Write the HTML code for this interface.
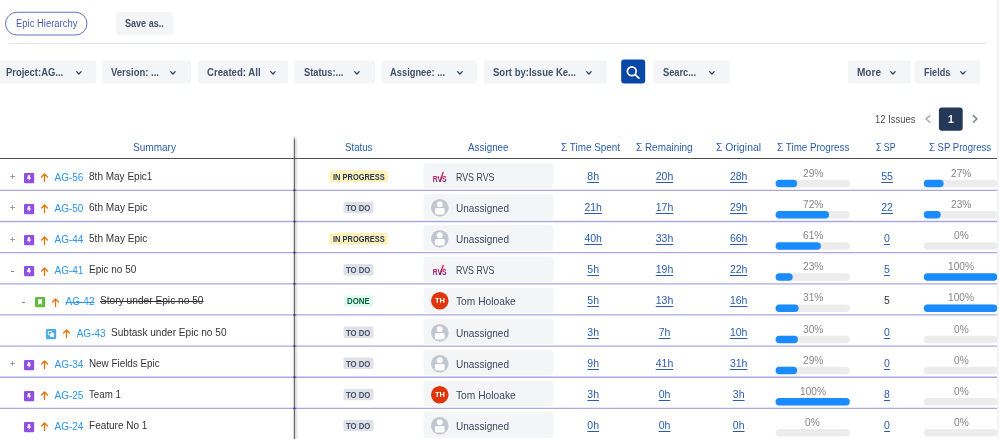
<!DOCTYPE html><html><head><meta charset="utf-8"><title>Epic Hierarchy</title><style>
*{box-sizing:border-box;margin:0;padding:0}
html,body{width:999px;height:439px;overflow:hidden;background:#fff}
body{font-family:"Liberation Sans",sans-serif;font-size:10px;color:#333;position:relative}
#app{position:absolute;left:0;top:0;width:999px;height:439px;will-change:transform}
.a,.t{position:absolute}
.t{white-space:pre}
svg{position:absolute;overflow:visible}
</style></head><body><div id="app">
<svg style="left:0;top:0" width="999" height="439" viewBox="0 0 999 439"><rect x="5.50" y="12.25" width="81.50" height="22.75" rx="11.40" fill="#fff" stroke="#6270c4" stroke-width="1"/><rect x="116.30" y="12.00" width="56.70" height="23.10" rx="3.00" fill="#f4f5f7"/><rect x="9.00" y="43.10" width="977.00" height="1.00" rx="0.00" fill="#e5e5e5"/><rect x="-3.00" y="60.40" width="99.20" height="23.00" rx="3.00" fill="#f4f5f7"/><rect x="102.40" y="60.40" width="88.60" height="23.00" rx="3.00" fill="#f4f5f7"/><rect x="198.00" y="60.40" width="90.20" height="23.00" rx="3.00" fill="#f4f5f7"/><rect x="294.60" y="60.40" width="80.40" height="23.00" rx="3.00" fill="#f4f5f7"/><rect x="381.40" y="60.40" width="95.80" height="23.00" rx="3.00" fill="#f4f5f7"/><rect x="483.60" y="60.40" width="123.00" height="23.00" rx="3.00" fill="#f4f5f7"/><rect x="653.60" y="60.40" width="76.00" height="23.00" rx="3.00" fill="#f4f5f7"/><rect x="847.90" y="60.40" width="62.70" height="23.00" rx="3.00" fill="#f4f5f7"/><rect x="914.30" y="60.40" width="66.00" height="23.00" rx="3.00" fill="#f4f5f7"/><rect x="621.20" y="59.60" width="24.00" height="24.00" rx="3.00" fill="#0747a6"/><rect x="938.90" y="107.60" width="23.80" height="23.20" rx="3.00" fill="#253858"/><rect x="329.25" y="170.60" width="58.50" height="11.50" rx="2.00" fill="#fff0b3"/><rect x="423.50" y="163.00" width="129.70" height="25.50" rx="3.00" fill="#f4f5f7"/><rect x="775.60" y="179.85" width="74.20" height="7.50" rx="3.75" fill="#ececec"/><rect x="775.60" y="179.85" width="21.52" height="7.50" rx="3.75" fill="#1a8cff"/><rect x="923.80" y="179.85" width="73.50" height="7.50" rx="3.75" fill="#ececec"/><rect x="923.80" y="179.85" width="19.84" height="7.50" rx="3.75" fill="#1a8cff"/><rect x="343.50" y="201.76" width="30.00" height="11.50" rx="2.00" fill="#dfe1e6"/><rect x="423.50" y="194.20" width="129.70" height="25.46" rx="3.00" fill="#f4f5f7"/><rect x="775.60" y="211.01" width="74.20" height="7.50" rx="3.75" fill="#ececec"/><rect x="775.60" y="211.01" width="53.42" height="7.50" rx="3.75" fill="#1a8cff"/><rect x="923.80" y="211.01" width="73.50" height="7.50" rx="3.75" fill="#ececec"/><rect x="923.80" y="211.01" width="16.91" height="7.50" rx="3.75" fill="#1a8cff"/><rect x="329.25" y="232.90" width="58.50" height="11.50" rx="2.00" fill="#fff0b3"/><rect x="423.50" y="225.36" width="129.70" height="25.44" rx="3.00" fill="#f4f5f7"/><rect x="775.60" y="242.15" width="74.20" height="7.50" rx="3.75" fill="#ececec"/><rect x="775.60" y="242.15" width="45.26" height="7.50" rx="3.75" fill="#1a8cff"/><rect x="923.80" y="242.15" width="73.50" height="7.50" rx="3.75" fill="#ececec"/><rect x="343.50" y="264.10" width="30.00" height="11.50" rx="2.00" fill="#dfe1e6"/><rect x="423.50" y="256.50" width="129.70" height="25.50" rx="3.00" fill="#f4f5f7"/><rect x="775.60" y="273.35" width="74.20" height="7.50" rx="3.75" fill="#ececec"/><rect x="775.60" y="273.35" width="17.07" height="7.50" rx="3.75" fill="#1a8cff"/><rect x="923.80" y="273.35" width="73.50" height="7.50" rx="3.75" fill="#ececec"/><rect x="923.80" y="273.35" width="73.50" height="7.50" rx="3.75" fill="#1a8cff"/><rect x="344.00" y="295.20" width="29.00" height="11.50" rx="2.00" fill="#e0fbec"/><rect x="423.50" y="287.70" width="129.70" height="25.40" rx="3.00" fill="#f4f5f7"/><rect x="775.60" y="304.45" width="74.20" height="7.50" rx="3.75" fill="#ececec"/><rect x="775.60" y="304.45" width="23.00" height="7.50" rx="3.75" fill="#1a8cff"/><rect x="923.80" y="304.45" width="73.50" height="7.50" rx="3.75" fill="#ececec"/><rect x="923.80" y="304.45" width="73.50" height="7.50" rx="3.75" fill="#1a8cff"/><rect x="343.50" y="326.40" width="30.00" height="11.50" rx="2.00" fill="#dfe1e6"/><rect x="423.50" y="318.80" width="129.70" height="25.50" rx="3.00" fill="#f4f5f7"/><rect x="775.60" y="335.65" width="74.20" height="7.50" rx="3.75" fill="#ececec"/><rect x="775.60" y="335.65" width="22.26" height="7.50" rx="3.75" fill="#1a8cff"/><rect x="923.80" y="335.65" width="73.50" height="7.50" rx="3.75" fill="#ececec"/><rect x="343.50" y="357.50" width="30.00" height="11.50" rx="2.00" fill="#dfe1e6"/><rect x="423.50" y="350.00" width="129.70" height="25.40" rx="3.00" fill="#f4f5f7"/><rect x="775.60" y="366.75" width="74.20" height="7.50" rx="3.75" fill="#ececec"/><rect x="775.60" y="366.75" width="21.52" height="7.50" rx="3.75" fill="#1a8cff"/><rect x="923.80" y="366.75" width="73.50" height="7.50" rx="3.75" fill="#ececec"/><rect x="343.50" y="388.70" width="30.00" height="11.50" rx="2.00" fill="#dfe1e6"/><rect x="423.50" y="381.10" width="129.70" height="25.50" rx="3.00" fill="#f4f5f7"/><rect x="775.60" y="397.95" width="74.20" height="7.50" rx="3.75" fill="#ececec"/><rect x="775.60" y="397.95" width="74.20" height="7.50" rx="3.75" fill="#1a8cff"/><rect x="923.80" y="397.95" width="73.50" height="7.50" rx="3.75" fill="#ececec"/><rect x="343.50" y="419.80" width="30.00" height="11.50" rx="2.00" fill="#dfe1e6"/><rect x="423.50" y="412.30" width="129.70" height="25.40" rx="3.00" fill="#f4f5f7"/><rect x="775.60" y="429.05" width="74.20" height="7.50" rx="3.75" fill="#ececec"/><rect x="923.80" y="429.05" width="73.50" height="7.50" rx="3.75" fill="#ececec"/></svg>
<div class="t" style="left:15.50px;top:16.00px;font-size:10px;line-height:15px;color:#4a5ab8;transform:scaleX(0.9457);transform-origin:0 0;">Epic Hierarchy</div>
<div class="t" style="left:125.00px;top:16.00px;font-size:10.5px;line-height:14px;color:#42526e;font-weight:bold;transform:scaleX(0.8620);transform-origin:0 0;">Save as..</div>
<div class="t" style="left:6.40px;top:65.00px;font-size:10.5px;line-height:14px;color:#42526e;font-weight:bold;transform:scaleX(0.8992);transform-origin:0 0;">Project:AG...</div>
<svg style="left:76.0px;top:70.6px" width="6" height="4" viewBox="0 0 6 4"><path d="M0.6 0.6 L2.9 3 L5.2 0.6" fill="none" stroke="#344563" stroke-width="1.3" stroke-linecap="round" stroke-linejoin="round"/></svg>
<div class="t" style="left:111.40px;top:65.00px;font-size:10.5px;line-height:14px;color:#42526e;font-weight:bold;transform:scaleX(0.9038);transform-origin:0 0;">Version: ...</div>
<svg style="left:170.4px;top:70.6px" width="6" height="4" viewBox="0 0 6 4"><path d="M0.6 0.6 L2.9 3 L5.2 0.6" fill="none" stroke="#344563" stroke-width="1.3" stroke-linecap="round" stroke-linejoin="round"/></svg>
<div class="t" style="left:206.80px;top:65.00px;font-size:10.5px;line-height:14px;color:#42526e;font-weight:bold;transform:scaleX(0.9155);transform-origin:0 0;">Created: All</div>
<svg style="left:270.0px;top:70.6px" width="6" height="4" viewBox="0 0 6 4"><path d="M0.6 0.6 L2.9 3 L5.2 0.6" fill="none" stroke="#344563" stroke-width="1.3" stroke-linecap="round" stroke-linejoin="round"/></svg>
<div class="t" style="left:303.60px;top:65.00px;font-size:10.5px;line-height:14px;color:#42526e;font-weight:bold;transform:scaleX(0.8885);transform-origin:0 0;">Status:...</div>
<svg style="left:354.4px;top:70.6px" width="6" height="4" viewBox="0 0 6 4"><path d="M0.6 0.6 L2.9 3 L5.2 0.6" fill="none" stroke="#344563" stroke-width="1.3" stroke-linecap="round" stroke-linejoin="round"/></svg>
<div class="t" style="left:390.40px;top:65.00px;font-size:10.5px;line-height:14px;color:#42526e;font-weight:bold;transform:scaleX(0.8891);transform-origin:0 0;">Assignee: ...</div>
<svg style="left:457.0px;top:70.6px" width="6" height="4" viewBox="0 0 6 4"><path d="M0.6 0.6 L2.9 3 L5.2 0.6" fill="none" stroke="#344563" stroke-width="1.3" stroke-linecap="round" stroke-linejoin="round"/></svg>
<div class="t" style="left:492.60px;top:65.00px;font-size:10.5px;line-height:14px;color:#42526e;font-weight:bold;transform:scaleX(0.9060);transform-origin:0 0;">Sort by:Issue Ke...</div>
<svg style="left:586.0px;top:70.6px" width="6" height="4" viewBox="0 0 6 4"><path d="M0.6 0.6 L2.9 3 L5.2 0.6" fill="none" stroke="#344563" stroke-width="1.3" stroke-linecap="round" stroke-linejoin="round"/></svg>
<div class="t" style="left:662.60px;top:65.00px;font-size:10.5px;line-height:14px;color:#42526e;font-weight:bold;transform:scaleX(0.8829);transform-origin:0 0;">Searc...</div>
<svg style="left:708.8px;top:70.6px" width="6" height="4" viewBox="0 0 6 4"><path d="M0.6 0.6 L2.9 3 L5.2 0.6" fill="none" stroke="#344563" stroke-width="1.3" stroke-linecap="round" stroke-linejoin="round"/></svg>
<div class="t" style="left:856.90px;top:65.00px;font-size:10.5px;line-height:14px;color:#42526e;font-weight:bold;transform:scaleX(0.9564);transform-origin:0 0;">More</div>
<svg style="left:890.2px;top:70.6px" width="6" height="4" viewBox="0 0 6 4"><path d="M0.6 0.6 L2.9 3 L5.2 0.6" fill="none" stroke="#344563" stroke-width="1.3" stroke-linecap="round" stroke-linejoin="round"/></svg>
<div class="t" style="left:924.20px;top:65.00px;font-size:10.5px;line-height:14px;color:#42526e;font-weight:bold;transform:scaleX(0.8700);transform-origin:0 0;">Fields</div>
<svg style="left:959.9px;top:70.6px" width="6" height="4" viewBox="0 0 6 4"><path d="M0.6 0.6 L2.9 3 L5.2 0.6" fill="none" stroke="#344563" stroke-width="1.3" stroke-linecap="round" stroke-linejoin="round"/></svg>
<svg style="left:621.2px;top:59.6px" width="24" height="24" viewBox="0 0 24 24"><circle cx="10.8" cy="11.3" r="4.4" fill="none" stroke="#fff" stroke-width="1.7"/><path d="M14.2 14.7 L17.9 18.1" stroke="#fff" stroke-width="1.8" stroke-linecap="round"/></svg>
<div class="t" style="left:874.50px;top:112.00px;font-size:10px;line-height:15px;color:#505050;transform:scaleX(0.9483);transform-origin:0 0;">12 Issues</div>
<svg style="left:924.6px;top:114.9px" width="6" height="8" viewBox="0 0 6 8"><path d="M4.8 0.6 L1 3.9 L4.8 7.2" fill="none" stroke="#a0aabb" stroke-width="1.4" stroke-linecap="round" stroke-linejoin="round"/></svg>
<div class="t" style="left:948.08px;top:112.00px;font-size:10.5px;line-height:14px;color:#fff;font-weight:bold;">1</div>
<svg style="left:971.7px;top:114.9px" width="6" height="8" viewBox="0 0 6 8"><path d="M1.2 0.6 L5 3.9 L1.2 7.2" fill="none" stroke="#7a869a" stroke-width="1.4" stroke-linecap="round" stroke-linejoin="round"/></svg>
<div class="t" style="left:133.00px;top:140.00px;font-size:10.5px;line-height:14px;color:#2a5cad;transform:scaleX(0.9569);transform-origin:0 0;">Summary</div>
<div class="t" style="left:344.80px;top:140.00px;font-size:10.5px;line-height:14px;color:#2a5cad;transform:scaleX(0.9200);transform-origin:0 0;">Status</div>
<div class="t" style="left:468.20px;top:140.00px;font-size:10.5px;line-height:14px;color:#2a5cad;transform:scaleX(0.9397);transform-origin:0 0;">Assignee</div>
<div class="t" style="left:560.80px;top:140.00px;font-size:10.5px;line-height:14px;color:#2a5cad;transform:scaleX(0.9407);transform-origin:0 0;">Σ Time Spent</div>
<div class="t" style="left:635.55px;top:140.00px;font-size:10.5px;line-height:14px;color:#2a5cad;transform:scaleX(0.9478);transform-origin:0 0;">Σ Remaining</div>
<div class="t" style="left:716.10px;top:140.00px;font-size:10.5px;line-height:14px;color:#2a5cad;transform:scaleX(0.9870);transform-origin:0 0;">Σ Original</div>
<div class="t" style="left:776.70px;top:140.00px;font-size:10.5px;line-height:14px;color:#2a5cad;transform:scaleX(0.9366);transform-origin:0 0;">Σ Time Progress</div>
<div class="t" style="left:876.40px;top:140.00px;font-size:10.5px;line-height:14px;color:#2a5cad;transform:scaleX(0.8368);transform-origin:0 0;">Σ SP</div>
<div class="t" style="left:929.30px;top:140.00px;font-size:10.5px;line-height:14px;color:#2a5cad;transform:scaleX(0.9095);transform-origin:0 0;">Σ SP Progress</div>
<svg style="left:9.55px;top:174.30px" width="5" height="5" viewBox="0 0 5 5"><path d="M2.5 0.2 V4.8 M0.2 2.5 H4.8" stroke="#8993a4" stroke-width="0.9"/></svg>
<svg style="left:23.75px;top:172.70px" width="10.2" height="10.2" viewBox="0 0 10 10"><rect width="10" height="10" rx="1.2" fill="#904ee2"/><path d="M4.2 1.9 H6.2 L5.5 4.3 H7.1 L4.5 8.2 L4.9 5.8 H2.9 Z" fill="#fff"/></svg>
<svg style="left:40.95px;top:173.20px" width="7" height="9" viewBox="0 0 7 9"><path d="M3.5 8.6 V1 M0.55 4 L3.5 0.85 L6.45 4" fill="none" stroke="#e8740f" stroke-width="1.35" stroke-linecap="round" stroke-linejoin="round"/></svg>
<div class="t" style="left:54.50px;top:170.00px;font-size:10px;line-height:15px;color:#2b95f0;">AG-56</div>
<div class="t" style="left:89.05px;top:169.00px;font-size:10px;line-height:15px;color:#333;">8th May Epic1</div>
<div class="t" style="left:332.60px;top:172.00px;font-size:8.3px;line-height:10px;color:#253858;font-weight:bold;transform:scaleX(0.8987);transform-origin:0 0;">IN PROGRESS</div>
<svg style="left:431.00px;top:167.70px" width="17.6" height="17.6" viewBox="0 0 17.6 17.6"><text x="1.7" y="14.0" font-family="Liberation Sans, sans-serif" font-size="9" font-weight="bold" fill="url(#rg)" textLength="14" lengthAdjust="spacingAndGlyphs">RVS</text><path d="M9.3 13.2 L12.1 4.5" stroke="url(#rg2)" stroke-width="1.4" stroke-linecap="round"/></svg>
<div class="t" style="left:455.90px;top:170.00px;font-size:10.5px;line-height:14px;color:#3b4860;transform:scaleX(0.8399);transform-origin:0 0;">RVS RVS</div>
<div class="t" style="left:587.36px;top:169.00px;font-size:10.5px;line-height:14px;color:#2a5cad;text-decoration:underline;text-underline-offset:2px;">8h</div>
<div class="t" style="left:655.73px;top:169.00px;font-size:10.5px;line-height:14px;color:#2a5cad;text-decoration:underline;text-underline-offset:2px;">20h</div>
<div class="t" style="left:729.93px;top:169.00px;font-size:10.5px;line-height:14px;color:#2a5cad;text-decoration:underline;text-underline-offset:2px;">28h</div>
<div class="t" style="left:802.64px;top:166.00px;font-size:10.5px;line-height:14px;color:#868686;transform:scaleX(0.9664);transform-origin:0 0;">29%</div>
<div class="t" style="left:881.16px;top:169.00px;font-size:10.5px;line-height:14px;color:#2a5cad;text-decoration:underline;text-underline-offset:2px;">55</div>
<div class="t" style="left:951.04px;top:166.00px;font-size:10.5px;line-height:14px;color:#868686;transform:scaleX(0.9664);transform-origin:0 0;">27%</div>
<svg style="left:9.55px;top:205.46px" width="5" height="5" viewBox="0 0 5 5"><path d="M2.5 0.2 V4.8 M0.2 2.5 H4.8" stroke="#8993a4" stroke-width="0.9"/></svg>
<svg style="left:23.75px;top:203.86px" width="10.2" height="10.2" viewBox="0 0 10 10"><rect width="10" height="10" rx="1.2" fill="#904ee2"/><path d="M4.2 1.9 H6.2 L5.5 4.3 H7.1 L4.5 8.2 L4.9 5.8 H2.9 Z" fill="#fff"/></svg>
<svg style="left:40.95px;top:204.36px" width="7" height="9" viewBox="0 0 7 9"><path d="M3.5 8.6 V1 M0.55 4 L3.5 0.85 L6.45 4" fill="none" stroke="#e8740f" stroke-width="1.35" stroke-linecap="round" stroke-linejoin="round"/></svg>
<div class="t" style="left:54.50px;top:201.00px;font-size:10px;line-height:15px;color:#2b95f0;">AG-50</div>
<div class="t" style="left:89.05px;top:200.00px;font-size:10px;line-height:15px;color:#333;transform:scaleX(1.0102);transform-origin:0 0;">6th May Epic</div>
<div class="t" style="left:346.30px;top:203.00px;font-size:8.3px;line-height:10px;color:#42526e;font-weight:bold;transform:scaleX(0.9340);transform-origin:0 0;">TO DO</div>
<svg style="left:431.00px;top:198.86px" width="17.6" height="17.6" viewBox="0 0 17.6 17.6"><circle cx="8.8" cy="8.8" r="8.8" fill="#c1c7d0"/><circle cx="8.8" cy="5.2" r="2.9" fill="#fff"/><rect x="3.9" y="9.1" width="9.8" height="6.3" rx="1.6" fill="#fff"/></svg>
<div class="t" style="left:455.90px;top:201.00px;font-size:10.5px;line-height:14px;color:#3b4860;transform:scaleX(0.9558);transform-origin:0 0;">Unassigned</div>
<div class="t" style="left:584.43px;top:200.00px;font-size:10.5px;line-height:14px;color:#2a5cad;text-decoration:underline;text-underline-offset:2px;">21h</div>
<div class="t" style="left:655.73px;top:200.00px;font-size:10.5px;line-height:14px;color:#2a5cad;text-decoration:underline;text-underline-offset:2px;">17h</div>
<div class="t" style="left:729.93px;top:200.00px;font-size:10.5px;line-height:14px;color:#2a5cad;text-decoration:underline;text-underline-offset:2px;">29h</div>
<div class="t" style="left:802.64px;top:197.00px;font-size:10.5px;line-height:14px;color:#868686;transform:scaleX(0.9664);transform-origin:0 0;">72%</div>
<div class="t" style="left:881.16px;top:200.00px;font-size:10.5px;line-height:14px;color:#2a5cad;text-decoration:underline;text-underline-offset:2px;">22</div>
<div class="t" style="left:951.04px;top:197.00px;font-size:10.5px;line-height:14px;color:#868686;transform:scaleX(0.9664);transform-origin:0 0;">23%</div>
<svg style="left:9.55px;top:236.60px" width="5" height="5" viewBox="0 0 5 5"><path d="M2.5 0.2 V4.8 M0.2 2.5 H4.8" stroke="#8993a4" stroke-width="0.9"/></svg>
<svg style="left:23.75px;top:235.00px" width="10.2" height="10.2" viewBox="0 0 10 10"><rect width="10" height="10" rx="1.2" fill="#904ee2"/><path d="M4.2 1.9 H6.2 L5.5 4.3 H7.1 L4.5 8.2 L4.9 5.8 H2.9 Z" fill="#fff"/></svg>
<svg style="left:40.95px;top:235.50px" width="7" height="9" viewBox="0 0 7 9"><path d="M3.5 8.6 V1 M0.55 4 L3.5 0.85 L6.45 4" fill="none" stroke="#e8740f" stroke-width="1.35" stroke-linecap="round" stroke-linejoin="round"/></svg>
<div class="t" style="left:54.50px;top:232.00px;font-size:10px;line-height:15px;color:#2b95f0;">AG-44</div>
<div class="t" style="left:89.05px;top:231.00px;font-size:10px;line-height:15px;color:#333;transform:scaleX(1.0102);transform-origin:0 0;">5th May Epic</div>
<div class="t" style="left:332.60px;top:234.00px;font-size:8.3px;line-height:10px;color:#253858;font-weight:bold;transform:scaleX(0.8987);transform-origin:0 0;">IN PROGRESS</div>
<svg style="left:431.00px;top:230.00px" width="17.6" height="17.6" viewBox="0 0 17.6 17.6"><circle cx="8.8" cy="8.8" r="8.8" fill="#c1c7d0"/><circle cx="8.8" cy="5.2" r="2.9" fill="#fff"/><rect x="3.9" y="9.1" width="9.8" height="6.3" rx="1.6" fill="#fff"/></svg>
<div class="t" style="left:455.90px;top:232.00px;font-size:10.5px;line-height:14px;color:#3b4860;transform:scaleX(0.9558);transform-origin:0 0;">Unassigned</div>
<div class="t" style="left:584.43px;top:231.00px;font-size:10.5px;line-height:14px;color:#2a5cad;text-decoration:underline;text-underline-offset:2px;">40h</div>
<div class="t" style="left:655.73px;top:231.00px;font-size:10.5px;line-height:14px;color:#2a5cad;text-decoration:underline;text-underline-offset:2px;">33h</div>
<div class="t" style="left:729.93px;top:231.00px;font-size:10.5px;line-height:14px;color:#2a5cad;text-decoration:underline;text-underline-offset:2px;">66h</div>
<div class="t" style="left:802.64px;top:228.00px;font-size:10.5px;line-height:14px;color:#868686;transform:scaleX(0.9664);transform-origin:0 0;">61%</div>
<div class="t" style="left:884.08px;top:231.00px;font-size:10.5px;line-height:14px;color:#2a5cad;text-decoration:underline;text-underline-offset:2px;">0</div>
<div class="t" style="left:953.87px;top:228.00px;font-size:10.5px;line-height:14px;color:#868686;transform:scaleX(0.9657);transform-origin:0 0;">0%</div>
<svg style="left:10.55px;top:270.50px" width="3" height="1" viewBox="0 0 3 1"><path d="M0 .5 H3" stroke="#7a8699" stroke-width="1"/></svg>
<svg style="left:23.75px;top:266.20px" width="10.2" height="10.2" viewBox="0 0 10 10"><rect width="10" height="10" rx="1.2" fill="#904ee2"/><path d="M4.2 1.9 H6.2 L5.5 4.3 H7.1 L4.5 8.2 L4.9 5.8 H2.9 Z" fill="#fff"/></svg>
<svg style="left:40.95px;top:266.70px" width="7" height="9" viewBox="0 0 7 9"><path d="M3.5 8.6 V1 M0.55 4 L3.5 0.85 L6.45 4" fill="none" stroke="#e8740f" stroke-width="1.35" stroke-linecap="round" stroke-linejoin="round"/></svg>
<div class="t" style="left:54.50px;top:263.00px;font-size:10px;line-height:15px;color:#2b95f0;">AG-41</div>
<div class="t" style="left:89.05px;top:262.00px;font-size:10px;line-height:15px;color:#333;">Epic no 50</div>
<div class="t" style="left:346.30px;top:265.00px;font-size:8.3px;line-height:10px;color:#42526e;font-weight:bold;transform:scaleX(0.9340);transform-origin:0 0;">TO DO</div>
<svg style="left:431.00px;top:261.20px" width="17.6" height="17.6" viewBox="0 0 17.6 17.6"><text x="1.7" y="14.0" font-family="Liberation Sans, sans-serif" font-size="9" font-weight="bold" fill="url(#rg)" textLength="14" lengthAdjust="spacingAndGlyphs">RVS</text><path d="M9.3 13.2 L12.1 4.5" stroke="url(#rg2)" stroke-width="1.4" stroke-linecap="round"/></svg>
<div class="t" style="left:455.90px;top:263.00px;font-size:10.5px;line-height:14px;color:#3b4860;transform:scaleX(0.8399);transform-origin:0 0;">RVS RVS</div>
<div class="t" style="left:587.36px;top:262.00px;font-size:10.5px;line-height:14px;color:#2a5cad;text-decoration:underline;text-underline-offset:2px;">5h</div>
<div class="t" style="left:655.73px;top:262.00px;font-size:10.5px;line-height:14px;color:#2a5cad;text-decoration:underline;text-underline-offset:2px;">19h</div>
<div class="t" style="left:729.93px;top:262.00px;font-size:10.5px;line-height:14px;color:#2a5cad;text-decoration:underline;text-underline-offset:2px;">22h</div>
<div class="t" style="left:802.64px;top:259.00px;font-size:10.5px;line-height:14px;color:#868686;transform:scaleX(0.9664);transform-origin:0 0;">23%</div>
<div class="t" style="left:884.08px;top:262.00px;font-size:10.5px;line-height:14px;color:#2a5cad;text-decoration:underline;text-underline-offset:2px;">5</div>
<div class="t" style="left:948.22px;top:259.00px;font-size:10.5px;line-height:14px;color:#868686;transform:scaleX(0.9663);transform-origin:0 0;">100%</div>
<svg style="left:21.65px;top:301.60px" width="3" height="1" viewBox="0 0 3 1"><path d="M0 .5 H3" stroke="#7a8699" stroke-width="1"/></svg>
<svg style="left:34.85px;top:297.30px" width="10.2" height="10.2" viewBox="0 0 10 10"><rect width="10" height="10" rx="1.2" fill="#63ba3c"/><path d="M3.1 2.3 H6.9 V7.8 L5 6.1 L3.1 7.8 Z" fill="#fff"/></svg>
<svg style="left:52.05px;top:297.80px" width="7" height="9" viewBox="0 0 7 9"><path d="M3.5 8.6 V1 M0.55 4 L3.5 0.85 L6.45 4" fill="none" stroke="#e8740f" stroke-width="1.35" stroke-linecap="round" stroke-linejoin="round"/></svg>
<div class="t" style="left:65.60px;top:294.00px;font-size:10px;line-height:15px;color:#2b95f0;text-decoration:line-through;">AG-42</div>
<div class="t" style="left:100.15px;top:293.00px;font-size:10px;line-height:15px;color:#333;transform:scaleX(1.0174);transform-origin:0 0;text-decoration:line-through;">Story under Epic no 50</div>
<div class="t" style="left:347.10px;top:296.00px;font-size:8.3px;line-height:10px;color:#006644;font-weight:bold;transform:scaleX(0.9506);transform-origin:0 0;">DONE</div>
<svg style="left:431.00px;top:292.30px" width="17.6" height="17.6" viewBox="0 0 17.6 17.6"><circle cx="8.8" cy="8.8" r="8.8" fill="#de350b"/><text x="8.8" y="11.5" font-family="Liberation Sans, sans-serif" font-size="7.4" font-weight="bold" fill="#fff" text-anchor="middle">TH</text></svg>
<div class="t" style="left:455.90px;top:294.00px;font-size:10.5px;line-height:14px;color:#3b4860;transform:scaleX(0.9742);transform-origin:0 0;">Tom Holoake</div>
<div class="t" style="left:587.36px;top:293.00px;font-size:10.5px;line-height:14px;color:#2a5cad;text-decoration:underline;text-underline-offset:2px;">5h</div>
<div class="t" style="left:655.73px;top:293.00px;font-size:10.5px;line-height:14px;color:#2a5cad;text-decoration:underline;text-underline-offset:2px;">13h</div>
<div class="t" style="left:729.93px;top:293.00px;font-size:10.5px;line-height:14px;color:#2a5cad;text-decoration:underline;text-underline-offset:2px;">16h</div>
<div class="t" style="left:802.64px;top:290.00px;font-size:10.5px;line-height:14px;color:#868686;transform:scaleX(0.9664);transform-origin:0 0;">31%</div>
<div class="t" style="left:884.08px;top:293.00px;font-size:10.5px;line-height:14px;color:#333;">5</div>
<div class="t" style="left:948.22px;top:290.00px;font-size:10.5px;line-height:14px;color:#868686;transform:scaleX(0.9663);transform-origin:0 0;">100%</div>
<svg style="left:45.95px;top:328.50px" width="10.2" height="10.2" viewBox="0 0 10 10"><rect width="10" height="10" rx="1.2" fill="#4bade8"/><rect x="2.3" y="2.3" width="3.6" height="3.6" rx=".7" fill="none" stroke="#fff" stroke-width=".9"/><rect x="4.1" y="4.1" width="3.8" height="3.8" rx=".7" fill="#fff"/></svg>
<svg style="left:63.15px;top:329.00px" width="7" height="9" viewBox="0 0 7 9"><path d="M3.5 8.6 V1 M0.55 4 L3.5 0.85 L6.45 4" fill="none" stroke="#e8740f" stroke-width="1.35" stroke-linecap="round" stroke-linejoin="round"/></svg>
<div class="t" style="left:76.70px;top:326.00px;font-size:10px;line-height:15px;color:#2b95f0;">AG-43</div>
<div class="t" style="left:111.25px;top:325.00px;font-size:10px;line-height:15px;color:#333;transform:scaleX(1.0085);transform-origin:0 0;">Subtask under Epic no 50</div>
<div class="t" style="left:346.30px;top:328.00px;font-size:8.3px;line-height:10px;color:#42526e;font-weight:bold;transform:scaleX(0.9340);transform-origin:0 0;">TO DO</div>
<svg style="left:431.00px;top:323.50px" width="17.6" height="17.6" viewBox="0 0 17.6 17.6"><circle cx="8.8" cy="8.8" r="8.8" fill="#c1c7d0"/><circle cx="8.8" cy="5.2" r="2.9" fill="#fff"/><rect x="3.9" y="9.1" width="9.8" height="6.3" rx="1.6" fill="#fff"/></svg>
<div class="t" style="left:455.90px;top:326.00px;font-size:10.5px;line-height:14px;color:#3b4860;transform:scaleX(0.9558);transform-origin:0 0;">Unassigned</div>
<div class="t" style="left:587.36px;top:325.00px;font-size:10.5px;line-height:14px;color:#2a5cad;text-decoration:underline;text-underline-offset:2px;">3h</div>
<div class="t" style="left:658.66px;top:325.00px;font-size:10.5px;line-height:14px;color:#2a5cad;text-decoration:underline;text-underline-offset:2px;">7h</div>
<div class="t" style="left:729.93px;top:325.00px;font-size:10.5px;line-height:14px;color:#2a5cad;text-decoration:underline;text-underline-offset:2px;">10h</div>
<div class="t" style="left:802.64px;top:322.00px;font-size:10.5px;line-height:14px;color:#868686;transform:scaleX(0.9664);transform-origin:0 0;">30%</div>
<div class="t" style="left:884.08px;top:325.00px;font-size:10.5px;line-height:14px;color:#2a5cad;text-decoration:underline;text-underline-offset:2px;">0</div>
<div class="t" style="left:953.87px;top:322.00px;font-size:10.5px;line-height:14px;color:#868686;transform:scaleX(0.9657);transform-origin:0 0;">0%</div>
<svg style="left:9.55px;top:361.20px" width="5" height="5" viewBox="0 0 5 5"><path d="M2.5 0.2 V4.8 M0.2 2.5 H4.8" stroke="#8993a4" stroke-width="0.9"/></svg>
<svg style="left:23.75px;top:359.60px" width="10.2" height="10.2" viewBox="0 0 10 10"><rect width="10" height="10" rx="1.2" fill="#904ee2"/><path d="M4.2 1.9 H6.2 L5.5 4.3 H7.1 L4.5 8.2 L4.9 5.8 H2.9 Z" fill="#fff"/></svg>
<svg style="left:40.95px;top:360.10px" width="7" height="9" viewBox="0 0 7 9"><path d="M3.5 8.6 V1 M0.55 4 L3.5 0.85 L6.45 4" fill="none" stroke="#e8740f" stroke-width="1.35" stroke-linecap="round" stroke-linejoin="round"/></svg>
<div class="t" style="left:54.50px;top:357.00px;font-size:10px;line-height:15px;color:#2b95f0;">AG-34</div>
<div class="t" style="left:89.05px;top:356.00px;font-size:10px;line-height:15px;color:#333;transform:scaleX(0.9860);transform-origin:0 0;">New Fields Epic</div>
<div class="t" style="left:346.30px;top:359.00px;font-size:8.3px;line-height:10px;color:#42526e;font-weight:bold;transform:scaleX(0.9340);transform-origin:0 0;">TO DO</div>
<svg style="left:431.00px;top:354.60px" width="17.6" height="17.6" viewBox="0 0 17.6 17.6"><circle cx="8.8" cy="8.8" r="8.8" fill="#c1c7d0"/><circle cx="8.8" cy="5.2" r="2.9" fill="#fff"/><rect x="3.9" y="9.1" width="9.8" height="6.3" rx="1.6" fill="#fff"/></svg>
<div class="t" style="left:455.90px;top:357.00px;font-size:10.5px;line-height:14px;color:#3b4860;transform:scaleX(0.9558);transform-origin:0 0;">Unassigned</div>
<div class="t" style="left:587.36px;top:356.00px;font-size:10.5px;line-height:14px;color:#2a5cad;text-decoration:underline;text-underline-offset:2px;">9h</div>
<div class="t" style="left:655.73px;top:356.00px;font-size:10.5px;line-height:14px;color:#2a5cad;text-decoration:underline;text-underline-offset:2px;">41h</div>
<div class="t" style="left:729.93px;top:356.00px;font-size:10.5px;line-height:14px;color:#2a5cad;text-decoration:underline;text-underline-offset:2px;">31h</div>
<div class="t" style="left:802.64px;top:353.00px;font-size:10.5px;line-height:14px;color:#868686;transform:scaleX(0.9664);transform-origin:0 0;">29%</div>
<div class="t" style="left:884.08px;top:356.00px;font-size:10.5px;line-height:14px;color:#2a5cad;text-decoration:underline;text-underline-offset:2px;">0</div>
<div class="t" style="left:953.87px;top:353.00px;font-size:10.5px;line-height:14px;color:#868686;transform:scaleX(0.9657);transform-origin:0 0;">0%</div>
<svg style="left:23.75px;top:390.80px" width="10.2" height="10.2" viewBox="0 0 10 10"><rect width="10" height="10" rx="1.2" fill="#904ee2"/><path d="M4.2 1.9 H6.2 L5.5 4.3 H7.1 L4.5 8.2 L4.9 5.8 H2.9 Z" fill="#fff"/></svg>
<svg style="left:40.95px;top:391.30px" width="7" height="9" viewBox="0 0 7 9"><path d="M3.5 8.6 V1 M0.55 4 L3.5 0.85 L6.45 4" fill="none" stroke="#e8740f" stroke-width="1.35" stroke-linecap="round" stroke-linejoin="round"/></svg>
<div class="t" style="left:54.50px;top:388.00px;font-size:10px;line-height:15px;color:#2b95f0;">AG-25</div>
<div class="t" style="left:89.05px;top:387.00px;font-size:10px;line-height:15px;color:#333;transform:scaleX(0.9727);transform-origin:0 0;">Team 1</div>
<div class="t" style="left:346.30px;top:390.00px;font-size:8.3px;line-height:10px;color:#42526e;font-weight:bold;transform:scaleX(0.9340);transform-origin:0 0;">TO DO</div>
<svg style="left:431.00px;top:385.80px" width="17.6" height="17.6" viewBox="0 0 17.6 17.6"><circle cx="8.8" cy="8.8" r="8.8" fill="#de350b"/><text x="8.8" y="11.5" font-family="Liberation Sans, sans-serif" font-size="7.4" font-weight="bold" fill="#fff" text-anchor="middle">TH</text></svg>
<div class="t" style="left:455.90px;top:388.00px;font-size:10.5px;line-height:14px;color:#3b4860;transform:scaleX(0.9742);transform-origin:0 0;">Tom Holoake</div>
<div class="t" style="left:587.36px;top:387.00px;font-size:10.5px;line-height:14px;color:#2a5cad;text-decoration:underline;text-underline-offset:2px;">3h</div>
<div class="t" style="left:658.66px;top:387.00px;font-size:10.5px;line-height:14px;color:#2a5cad;text-decoration:underline;text-underline-offset:2px;">0h</div>
<div class="t" style="left:732.86px;top:387.00px;font-size:10.5px;line-height:14px;color:#2a5cad;text-decoration:underline;text-underline-offset:2px;">3h</div>
<div class="t" style="left:799.82px;top:384.00px;font-size:10.5px;line-height:14px;color:#868686;transform:scaleX(0.9663);transform-origin:0 0;">100%</div>
<div class="t" style="left:884.08px;top:387.00px;font-size:10.5px;line-height:14px;color:#2a5cad;text-decoration:underline;text-underline-offset:2px;">8</div>
<div class="t" style="left:953.87px;top:384.00px;font-size:10.5px;line-height:14px;color:#868686;transform:scaleX(0.9657);transform-origin:0 0;">0%</div>
<svg style="left:23.75px;top:421.90px" width="10.2" height="10.2" viewBox="0 0 10 10"><rect width="10" height="10" rx="1.2" fill="#904ee2"/><path d="M4.2 1.9 H6.2 L5.5 4.3 H7.1 L4.5 8.2 L4.9 5.8 H2.9 Z" fill="#fff"/></svg>
<svg style="left:40.95px;top:422.40px" width="7" height="9" viewBox="0 0 7 9"><path d="M3.5 8.6 V1 M0.55 4 L3.5 0.85 L6.45 4" fill="none" stroke="#e8740f" stroke-width="1.35" stroke-linecap="round" stroke-linejoin="round"/></svg>
<div class="t" style="left:54.50px;top:419.00px;font-size:10px;line-height:15px;color:#2b95f0;">AG-24</div>
<div class="t" style="left:89.05px;top:418.00px;font-size:10px;line-height:15px;color:#333;">Feature No 1</div>
<div class="t" style="left:346.30px;top:421.00px;font-size:8.3px;line-height:10px;color:#42526e;font-weight:bold;transform:scaleX(0.9340);transform-origin:0 0;">TO DO</div>
<svg style="left:431.00px;top:416.90px" width="17.6" height="17.6" viewBox="0 0 17.6 17.6"><circle cx="8.8" cy="8.8" r="8.8" fill="#c1c7d0"/><circle cx="8.8" cy="5.2" r="2.9" fill="#fff"/><rect x="3.9" y="9.1" width="9.8" height="6.3" rx="1.6" fill="#fff"/></svg>
<div class="t" style="left:455.90px;top:419.00px;font-size:10.5px;line-height:14px;color:#3b4860;transform:scaleX(0.9558);transform-origin:0 0;">Unassigned</div>
<div class="t" style="left:587.36px;top:418.00px;font-size:10.5px;line-height:14px;color:#2a5cad;text-decoration:underline;text-underline-offset:2px;">0h</div>
<div class="t" style="left:658.66px;top:418.00px;font-size:10.5px;line-height:14px;color:#2a5cad;text-decoration:underline;text-underline-offset:2px;">0h</div>
<div class="t" style="left:732.86px;top:418.00px;font-size:10.5px;line-height:14px;color:#2a5cad;text-decoration:underline;text-underline-offset:2px;">0h</div>
<div class="t" style="left:805.47px;top:415.00px;font-size:10.5px;line-height:14px;color:#868686;transform:scaleX(0.9657);transform-origin:0 0;">0%</div>
<div class="t" style="left:884.08px;top:418.00px;font-size:10.5px;line-height:14px;color:#2a5cad;text-decoration:underline;text-underline-offset:2px;">0</div>
<div class="t" style="left:953.87px;top:415.00px;font-size:10.5px;line-height:14px;color:#868686;transform:scaleX(0.9657);transform-origin:0 0;">0%</div>
<svg style="left:0;top:0" width="999" height="439" viewBox="0 0 999 439"><line x1="0" y1="190.3" x2="997.2" y2="190.3" stroke="#a9a9df" stroke-width="1.35"/><line x1="0" y1="221.5" x2="997.2" y2="221.5" stroke="#a9a9df" stroke-width="1.35"/><line x1="0" y1="252.6" x2="997.2" y2="252.6" stroke="#a9a9df" stroke-width="1.35"/><line x1="0" y1="283.8" x2="997.2" y2="283.8" stroke="#a9a9df" stroke-width="1.35"/><line x1="0" y1="314.9" x2="997.2" y2="314.9" stroke="#a9a9df" stroke-width="1.35"/><line x1="0" y1="346.1" x2="997.2" y2="346.1" stroke="#a9a9df" stroke-width="1.35"/><line x1="0" y1="377.2" x2="997.2" y2="377.2" stroke="#a9a9df" stroke-width="1.35"/><line x1="0" y1="408.4" x2="997.2" y2="408.4" stroke="#a9a9df" stroke-width="1.35"/><defs><linearGradient id="rg" x1="0" y1="0" x2="0" y2="1"><stop offset="0.15" stop-color="#dc1d50"/><stop offset="0.9" stop-color="#4b2a8c"/></linearGradient><linearGradient id="rg2" gradientUnits="userSpaceOnUse" x1="0" y1="4.9" x2="0" y2="13.6"><stop offset="0.3" stop-color="#e0204f"/><stop offset="1" stop-color="#7a2a80"/></linearGradient><linearGradient id="vs" x1="0" x2="1" y1="0" y2="0"><stop offset="0" stop-color="#000" stop-opacity=".16"/><stop offset="1" stop-color="#000" stop-opacity="0"/></linearGradient><linearGradient id="vf" x1="0" x2="0" y1="0" y2="1"><stop offset="0" stop-color="#fff" stop-opacity="1"/><stop offset="1" stop-color="#fff" stop-opacity="0"/></linearGradient></defs><rect x="294.9" y="136" width="3.6" height="303" fill="url(#vs)"/><rect x="292.9" y="136" width="1" height="303" fill="#000" opacity=".07"/><line x1="294.4" y1="136" x2="294.4" y2="439" stroke="#5c5c5c" stroke-width="1.05"/><rect x="290" y="135.5" width="12" height="5" fill="url(#vf)"/><line x1="0" y1="158.45" x2="997.2" y2="158.45" stroke="#505050" stroke-width="1.1"/><rect x="293.6" y="189.5" width="1.8" height="1.6" fill="#26268c"/><rect x="293.6" y="220.7" width="1.8" height="1.6" fill="#26268c"/><rect x="293.6" y="251.8" width="1.8" height="1.6" fill="#26268c"/><rect x="293.6" y="283.0" width="1.8" height="1.6" fill="#26268c"/><rect x="293.6" y="314.1" width="1.8" height="1.6" fill="#26268c"/><rect x="293.6" y="345.3" width="1.8" height="1.6" fill="#26268c"/><rect x="293.6" y="376.4" width="1.8" height="1.6" fill="#26268c"/><rect x="293.6" y="407.6" width="1.8" height="1.6" fill="#26268c"/><rect x="997.2" y="0" width="1.8" height="439" fill="#fff"/><rect x="997.4" y="0" width="1" height="439" fill="#e9e9e9"/><rect x="998.4" y="0" width=".6" height="439" fill="#f6f6f6"/></svg>
</div></body></html>
